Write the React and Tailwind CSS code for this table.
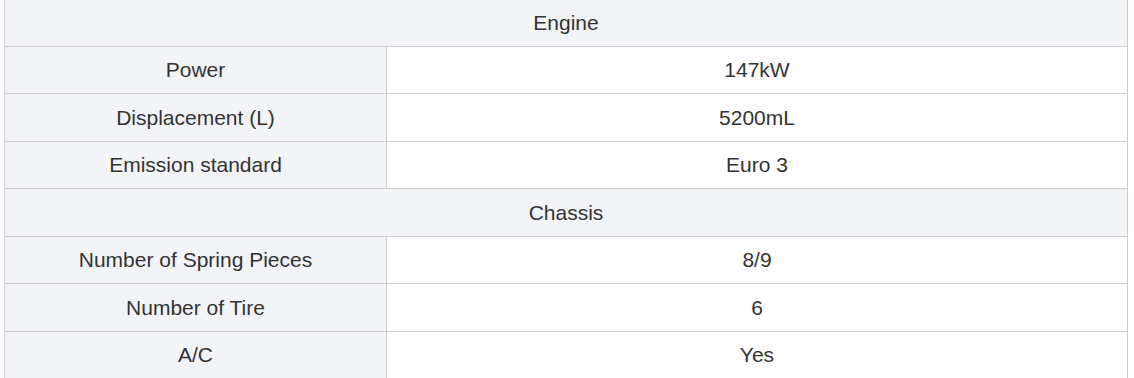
const sections = [
  {
    title: "Engine",
    rows: [
      ["Power", "147kW"],
      ["Displacement (L)", "5200mL"],
      ["Emission standard", "Euro 3"],
    ],
  },
  {
    title: "Chassis",
    rows: [
      ["Number of Spring Pieces", "8/9"],
      ["Number of Tire", "6"],
      ["A/C", "Yes"],
    ],
  },
];

const App = () => {
  return (
    <div className="bg-white h-[378px] overflow-hidden font-['Liberation_Sans',Arial,sans-serif] text-[21px] text-[#333]">
      <table className="ml-[4px] -mt-[2px] w-[1124px] border-collapse table-fixed">
        <colgroup>
          <col className="w-[382px]" />
          <col />
        </colgroup>
        <tbody>
          {sections.map((section) => (
            <>
              <tr key={section.title}>
                <td
                  colSpan={2}
                  className="h-[47.5px] border border-[#ccc] bg-[#f3f4f8] text-center p-0"
                >
                  {section.title}
                </td>
              </tr>
              {section.rows.map(([label, value]) => (
                <tr key={label}>
                  <td className="h-[47.5px] border border-[#ccc] bg-[#f3f4f8] text-center p-0">
                    {label}
                  </td>
                  <td className="h-[47.5px] border border-[#ccc] bg-white text-center p-0">
                    {value}
                  </td>
                </tr>
              ))}
            </>
          ))}
        </tbody>
      </table>
    </div>
  );
};

export default App;
